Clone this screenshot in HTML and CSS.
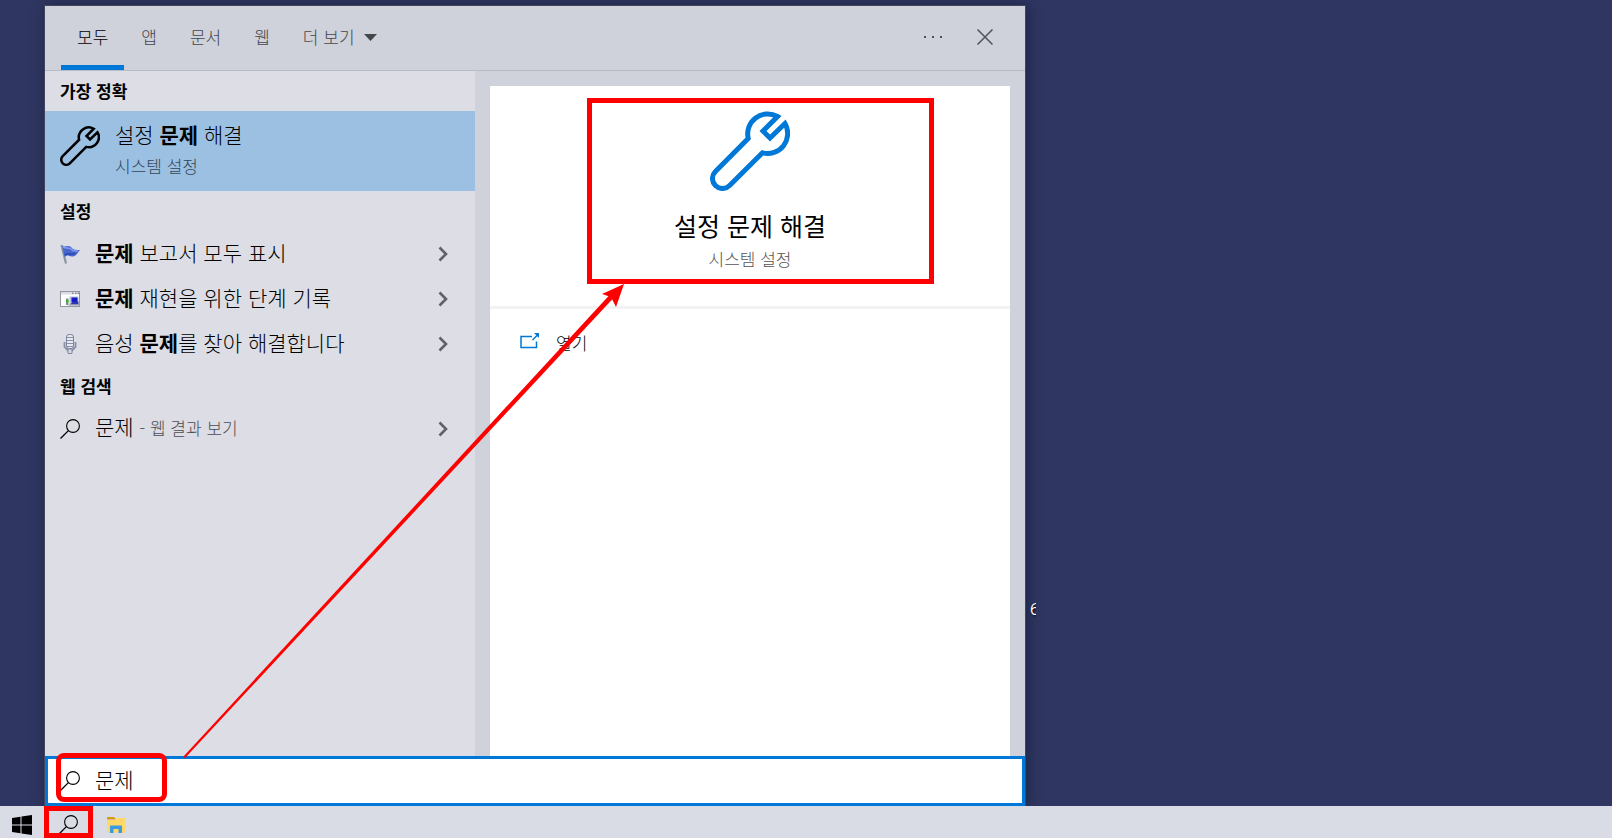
FILE: index.html
```html
<!DOCTYPE html>
<html lang="ko">
<head>
<meta charset="utf-8">
<title>문제 - 검색</title>
<link rel="stylesheet" href="styles.css">
</head>
<body>
<svg class="defs" aria-hidden="true">
  <symbol id="wrench" viewBox="0 0 80 80">
    <path d="M67.500 5.500A20 20 0 0 0 38.200 27.500L5.400 60.400A10 10 0 0 0 19.600 74.600L52.500 41.800A20 20 0 0 0 75 12.500L60 27L53 20Z" fill="none" stroke="currentColor" stroke-width="5"/>
  </symbol>
  <symbol id="search" viewBox="0 0 20 20">
    <path d="M.5 19.500L8.400 11.600" fill="none" stroke="currentColor" stroke-width="1.300"/>
    <circle cx="13" cy="7" r="6.400" fill="none" stroke="currentColor" stroke-width="1.100"/>
  </symbol>
  <symbol id="chevron" viewBox="0 0 10 16">
    <path d="M1.500 1.500L8 8L1.500 14.500" fill="none" stroke="currentColor" stroke-width="2.600"/>
  </symbol>
</svg>

<main class="desktop">
  <section class="window">
    <header class="header">
      <nav class="tabs">
        <button class="tab tab-active">모두</button>
        <button class="tab">앱</button>
        <button class="tab">문서</button>
        <button class="tab">웹</button>
        <button class="tab">더 보기<svg class="caret" viewBox="0 0 13 7"><path d="M0 0H13L6.500 7Z" fill="currentColor"/></svg></button>
      </nav>
      <div class="actions">
        <button class="icon-button" aria-label="옵션"><svg class="dots" viewBox="0 0 20 4"><path d="M1 1h2v2H1zM9 1h2v2H9zM17 1h2v2h-2z" fill="currentColor"/></svg></button>
        <button class="icon-button" aria-label="닫기"><svg class="close" viewBox="0 0 16 16"><path d="M.5 .5L15.500 15.500M15.500 .5L.5 15.500" stroke="currentColor" stroke-width="1.500"/></svg></button>
      </div>
    </header>

    <div class="content">
      <div class="results">
        <h2 class="group-title">가장 정확</h2>
        <button class="best">
          <svg class="best-icon"><use href="#wrench"/></svg>
          <span class="best-text">
            <span class="best-name">설정 <b>문제</b> 해결</span>
            <span class="best-kind">시스템 설정</span>
          </span>
        </button>

        <h2 class="group-title">설정</h2>
        <button class="row">
          <svg class="row-icon" viewBox="0 0 20 20">
            <path d="M1.500 1L6 19.500" stroke="#8a96a3" stroke-width="2.200"/>
            <path d="M2 1.500C5 4 7 .5 11 3C13 6 16 6 20 6C17 9 16 13 12 12.500C9 12 8 10 4.500 13Z" fill="#4767cf"/>
            <path d="M3 3C7 5 8 3 11 5C13 8 15 7 18 7" fill="none" stroke="#7f9cec" stroke-width="1.500"/>
            <path d="M5 11C8 8 12 12 15 9" fill="none" stroke="#2444ac" stroke-width="1.500"/>
          </svg>
          <span class="row-label"><b>문제</b> 보고서 모두 표시</span>
          <svg class="chevron"><use href="#chevron"/></svg>
        </button>
        <button class="row">
          <svg class="row-icon" viewBox="0 0 20 20">
            <rect x=".5" y="2.500" width="19" height="15" fill="#fff" stroke="#92949e"/>
            <path d="M1 3h18v2.500H1z" fill="#dcdde4"/>
            <path d="M12 3.500h1.500v1.500H12zM15 3.500h1.500v1.500H15zM17.500 3.500H19v1.500h-1.500z" fill="#858995"/>
            <path d="M9.500 7.500h9V15h-9z" fill="#b8bdd8"/>
            <path d="M11.500 8.500h6V13h-6z" fill="#1119c9"/>
            <path d="M10 15.500L13 12.500h5.500v3z" fill="#2d35a8"/>
            <path d="M6 9.500h2.500V16H6z" fill="#858e94"/>
            <path d="M6 11h2.500v2.500H6z" fill="#39b52b"/>
            <path d="M8.500 16h10.500" stroke="#83889b"/>
          </svg>
          <span class="row-label"><b>문제</b> 재현을 위한 단계 기록</span>
          <svg class="chevron"><use href="#chevron"/></svg>
        </button>
        <button class="row">
          <svg class="row-icon" viewBox="0 0 20 20">
            <path d="M4.500 8v5L8 16.500h4l3.500-3.500V8" fill="none" stroke="#8890a5" stroke-width="1.800"/>
            <rect x="6.500" y=".5" width="7" height="14" rx="2.500" fill="#e6e9f2" stroke="#7d859b"/>
            <path d="M7 3.500h6M7 6.500h6M7 9.500h6M7 12.500h6" stroke="#8890a5"/>
            <path d="M8 15h4v4.500H8z" fill="#d6dae5" stroke="#8188a0"/>
          </svg>
          <span class="row-label">음성 <b>문제</b>를 찾아 해결합니다</span>
          <svg class="chevron"><use href="#chevron"/></svg>
        </button>

        <h2 class="group-title">웹 검색</h2>
        <button class="row">
          <svg class="row-icon"><use href="#search"/></svg>
          <span class="row-label">문제 <small class="hint">- 웹 결과 보기</small></span>
          <svg class="chevron"><use href="#chevron"/></svg>
        </button>
      </div>

      <div class="preview">
        <article class="card">
          <div class="summary">
            <svg class="summary-icon"><use href="#wrench"/></svg>
            <h1 class="summary-name">설정 문제 해결</h1>
            <p class="summary-kind">시스템 설정</p>
            <span class="mark mark-card"></span>
          </div>
          <button class="open">
            <svg class="open-icon" viewBox="0 0 20 16">
              <path d="M12 3.500H1v11h15.500V8.500" fill="none" stroke="currentColor" stroke-width="1.500"/>
              <path d="M12.500 7L17.500 2" stroke="currentColor" stroke-width="1.500"/>
              <path d="M14 0h5v5z" fill="currentColor"/>
            </svg>
            열기
          </button>
        </article>
      </div>
    </div>

    <label class="search">
      <svg class="row-icon"><use href="#search"/></svg>
      <input class="search-input" type="text" value="문제" aria-label="검색">
      <span class="mark mark-search"></span>
    </label>
  </section>

  <span class="clipped-label">6</span>
  <svg class="arrow" viewBox="0 0 442 476" aria-hidden="true">
    <path d="M0 474L426.500 12L430 15.500L2 475Z" fill="#f00"/>
    <path d="M441 1L419 11L428 14L433 24Z" fill="#f00"/>
  </svg>
</main>

<footer class="taskbar">
  <button class="task task-start" aria-label="시작">
    <svg class="task-icon" viewBox="0 0 20 20"><path d="M0 3L8.500 1.800V9.500H0zM9.500 1.600L20 0V9.500H9.500zM0 10.500H8.500V18.300L0 17zM9.500 10.500H20V20L9.500 18.400z" fill="#000"/></svg>
  </button>
  <button class="task" aria-label="검색">
    <svg class="task-icon"><use href="#search"/></svg>
    <span class="mark mark-task"></span>
  </button>
  <button class="task" aria-label="파일 탐색기">
    <svg class="task-icon" viewBox="0 0 20 20">
      <path d="M1 2h7l2 2.500H1z" fill="#d99a12"/>
      <path d="M1 5h8l1.500-2H19v14.500H1z" fill="#ffd868"/>
      <path d="M4 18V10.500h12V18h-3.500v-4h-5v4z" fill="#3c9be0"/>
    </svg>
  </button>
</footer>
</body>
</html>
```

FILE: styles.css
```css
* {
  box-sizing: border-box;
}

body {
  margin: 0;
  min-height: 100vh;
  display: flex;
  flex-direction: column;
  overflow: hidden;
  background: #2e3661;
  color: #000;
  font-family: "Noto Sans CJK KR", sans-serif;
  font-size: 17px;
  font-weight: 300;
  line-height: 24px;
}

button {
  margin: 0;
  padding: 0;
  border: 0;
  background: none;
  color: inherit;
  font: inherit;
  text-align: left;
}

b {
  font-weight: 700;
}

svg {
  flex: none;
}

.defs {
  position: absolute;
  width: 0;
  height: 0;
}

.desktop {
  position: relative;
  flex: 1;
  display: flex;
  padding: 6px 35% 0 45px;
}

.window {
  flex: 0 1 980px;
  display: flex;
  flex-direction: column;
  background: #cfd1db;
  box-shadow: 0 0 0 1px #444660, 2px 0 12px rgba(10, 12, 35, 0.5);
}

.header {
  display: flex;
  justify-content: space-between;
  height: 65px;
  padding: 0 22px 0 16px;
  border-bottom: 1px solid #b8bac5;
}

.tabs {
  display: flex;
  gap: 1px;
}

.tab {
  display: flex;
  align-items: center;
  gap: 9px;
  padding: 3px 16px 0;
  border-bottom: 5px solid transparent;
  color: #44464c;
}

.tab-active {
  border-color: #0078d7;
  color: #000;
}

.caret {
  width: 13px;
  height: 7px;
}

.actions {
  display: flex;
  align-items: center;
  gap: 16px;
  padding-bottom: 2px;
  color: #505259;
}

.icon-button {
  display: flex;
  align-items: center;
  justify-content: center;
  width: 36px;
  height: 36px;
}

.dots {
  width: 20px;
  height: 4px;
}

.close {
  width: 16px;
  height: 16px;
}

.content {
  flex: 1;
  display: flex;
}

.results {
  flex: 0 1 430px;
  display: flex;
  flex-direction: column;
  background: #dcdde5;
}

.group-title {
  margin: 0;
  padding: 8px 15px;
  font-size: 17px;
  line-height: 24px;
  font-weight: 700;
}

.best {
  display: flex;
  align-items: flex-start;
  gap: 15px;
  padding: 8px 15px 10px;
  background: #9cc0e2;
}

.best-icon {
  width: 40px;
  height: 40px;
  margin-top: 7px;
}

.best-text {
  display: flex;
  flex-direction: column;
  gap: 2px;
}

.best-name {
  font-size: 21px;
  line-height: 30px;
}

.best-kind {
  line-height: 30px;
  color: #33475b;
}

.row {
  display: flex;
  align-items: center;
  gap: 15px;
  height: 45px;
  padding: 0 27px 0 15px;
}

.row-icon {
  width: 20px;
  height: 20px;
}

.row-label {
  flex: 1;
  padding-bottom: 3px;
  font-size: 21px;
}

.hint {
  font-size: 17px;
  color: #4c4d52;
}

.chevron {
  width: 10px;
  height: 16px;
  color: #606167;
}

.preview {
  flex: 1;
  display: flex;
  padding: 15px 15px 0;
}

.card {
  flex: 1;
  background: #fff;
}

.summary {
  position: relative;
  display: flex;
  flex-direction: column;
  align-items: center;
  padding: 25px 0 35px;
  border-bottom: 3px solid #f2f2f2;
}

.summary-icon {
  width: 80px;
  height: 80px;
  color: #0078d7;
}

.summary-name {
  margin: 16px 0 0;
  font-size: 25px;
  line-height: 36px;
  font-weight: 400;
}

.summary-kind {
  margin: 0;
  padding: 4px 0 0;
  color: #555;
}

.open {
  display: flex;
  align-items: center;
  gap: 16px;
  padding: 22px 30px;
}

.open-icon {
  width: 20px;
  height: 16px;
  margin-bottom: 4px;
  color: #0078d7;
}

.search {
  position: relative;
  display: flex;
  align-items: center;
  gap: 15px;
  height: 50px;
  padding: 0 12px;
  border: 3px solid #0078d7;
  background: #fff;
}

.search-input {
  flex: 1;
  min-width: 0;
  padding: 0 0 4px;
  border: 0;
  outline: 0;
  background: none;
  color: #000;
  font: inherit;
  font-size: 21px;
  line-height: 30px;
}

.mark {
  position: absolute;
  border: 5px solid #f00;
  pointer-events: none;
}

.mark-card {
  top: 12px;
  left: 97px;
  right: 76px;
  height: 186px;
}

.mark-search {
  top: -6px;
  left: 8px;
  width: 111px;
  height: 49px;
  border-radius: 8px;
}

.mark-task {
  inset: 0 -1px 0 0;
}

.arrow {
  position: absolute;
  top: 283px;
  left: 183px;
  width: 442px;
  height: 476px;
  pointer-events: none;
}

.clipped-label {
  align-self: flex-start;
  width: 6px;
  margin: 591px 0 0 5px;
  overflow: hidden;
  color: #fff;
  font-family: "Open Sans", sans-serif;
  font-size: 16px;
  font-weight: 400;
  text-shadow: 1px 1px 2px #000;
}

.taskbar {
  position: relative;
  display: flex;
  height: 32px;
  background: #d9dbe5;
}

.task {
  position: relative;
  display: flex;
  align-items: flex-end;
  justify-content: center;
  width: 48px;
  padding-bottom: 3px;
}

.task-start {
  width: 44px;
}

.task-icon {
  width: 20px;
  height: 20px;
}
```
